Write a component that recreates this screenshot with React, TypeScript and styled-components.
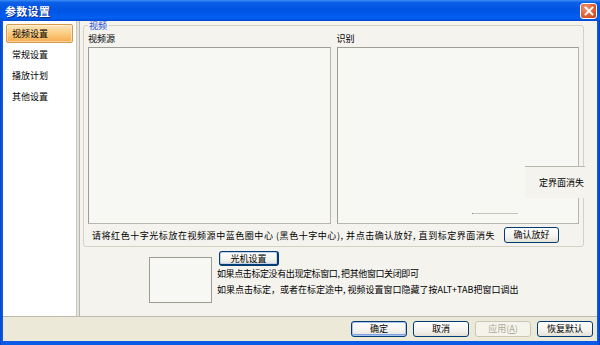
import React from "react";
import styled, { createGlobalStyle, css } from "styled-components";

const GlobalStyle = createGlobalStyle`
  html, body {
    margin: 0;
    padding: 0;
    overflow: hidden;
    background: #fff;
  }
  body {
    font-family: "Noto Sans CJK SC", "DejaVu Sans", sans-serif;
    font-size: 9px;
    color: #000;
  }
`;

const NAV_ITEMS = ["视频设置", "常规设置", "播放计划", "其他设置"];

export default function App() {
  return (
    <>
      <GlobalStyle />
      <Window>
        <TitleBar>
          <Title>参数设置</Title>
          <CloseButton aria-label="close">
            <svg width="10" height="10" viewBox="0 0 10 10">
              <path
                d="M1.5 1.5 L8.5 8.5 M8.5 1.5 L1.5 8.5"
                stroke="#fff"
                strokeWidth="1.8"
                strokeLinecap="square"
              />
            </svg>
          </CloseButton>
        </TitleBar>
        <Body>
          <Content>
            <Sidebar>
              {NAV_ITEMS.map((item, i) => (
                <NavItem key={item} $active={i === 0}>
                  {item}
                </NavItem>
              ))}
            </Sidebar>
            <Splitter />
            <Panel>
              <GroupBox>
                <Legend>视频</Legend>
                <Columns>
                  <Column>
                    <ColumnLabel>视频源</ColumnLabel>
                    <VideoBox />
                  </Column>
                  <Column>
                    <ColumnLabel>识别</ColumnLabel>
                    <VideoBox>
                      <Ghost>定界面消失</Ghost>
                      <GhostLine />
                    </VideoBox>
                  </Column>
                </Columns>
                <HintRow>
                  <HintText>
                    请将红色十字光标放在视频源中蓝色圈中心 (黑色十字中心), 并点击确认放好, 直到标定界面消失
                  </HintText>
                  <XpButton $width={55}>确认放好</XpButton>
                </HintRow>
              </GroupBox>
              <LowerRow>
                <PreviewBox />
                <LowerInfo>
                  <XpButton $width={60} $focused>
                    光机设置
                  </XpButton>
                  <InfoLine $spacing={-0.4}>
                    如果点击标定没有出现定标窗口, 把其他窗口关闭即可
                  </InfoLine>
                  <InfoLine $spacing={0}>
                    如果点击标定，或者在标定途中, 视频设置窗口隐藏了按ALT+TAB把窗口调出
                  </InfoLine>
                </LowerInfo>
              </LowerRow>
            </Panel>
          </Content>
          <Footer>
            <XpButton $width={56} $default>
              确定
            </XpButton>
            <XpButton $width={56}>取消</XpButton>
            <XpButton $width={56} disabled>
              应用(<u>A</u>)
            </XpButton>
            <XpButton $width={56}>恢复默认</XpButton>
          </Footer>
        </Body>
      </Window>
    </>
  );
}

const Window = styled.div`
  width: 600px;
  height: 345px;
  display: flex;
  flex-direction: column;
  background: linear-gradient(to right, #0842c8, #0a5ae6 2px, #0a5ae6 598px, #0738b8);
  box-sizing: border-box;
`;

const TitleBar = styled.div`
  height: 21px;
  flex: none;
  display: flex;
  align-items: center;
  justify-content: space-between;
  padding: 0 3px 0 5px;
  background: linear-gradient(
    to bottom,
    #3b8cf5 0%,
    #0a5fe6 12%,
    #0054e3 45%,
    #015ff0 85%,
    #0049d4 100%
  );
`;

const Title = styled.span`
  color: #fff;
  font-weight: bold;
  font-size: 11px;
  letter-spacing: 0.3px;
  text-shadow: 1px 1px 0 #0a2a8a;
`;

const CloseButton = styled.div`
  width: 15px;
  height: 14px;
  margin-top: 1px;
  display: flex;
  align-items: center;
  justify-content: center;
  border: 1px solid #fff;
  border-radius: 3px;
  background: radial-gradient(circle at 35% 30%, #f09a78 0%, #e0643c 50%, #c43e14 100%);
`;

const Body = styled.div`
  flex: 1;
  margin: 0 3px 4px 3px;
  display: flex;
  flex-direction: column;
  background: #ece9d8;
`;

const Content = styled.div`
  height: 295px;
  display: flex;
`;

const Sidebar = styled.div`
  width: 73px;
  box-sizing: border-box;
  padding: 3px 3px 0 3px;
  background: #fff;
  display: flex;
  flex-direction: column;
  gap: 2px;
`;

const NavItem = styled.div<{ $active?: boolean }>`
  height: 19px;
  box-sizing: border-box;
  padding-left: 5px;
  display: flex;
  align-items: center;
  font-size: 9px;
  border: 1px solid transparent;
  border-radius: 2px;
  ${(p) =>
    p.$active &&
    css`
      background: linear-gradient(to bottom, #fde6bd 0%, #fbcf86 45%, #f5ab4e 100%);
      border-color: #d99a48;
      box-shadow: inset 0 0 0 1px rgba(255, 255, 255, 0.45);
    `}
`;

const Splitter = styled.div`
  width: 4px;
  box-sizing: border-box;
  background: #e4e3dc;
  border-left: 1px solid #c9c8c0;
  border-right: 1px solid #b8b7ae;
`;

const Panel = styled.div`
  flex: 1;
  background: #f4f3ee;
  padding: 0 13px 0 3px;
  display: flex;
  flex-direction: column;
`;

const GroupBox = styled.fieldset`
  margin: 0;
  padding: 0 4px 3px 4px;
  border: 1px solid #d3d2c4;
  border-radius: 3px;
  min-width: 0;
`;

const Legend = styled.legend`
  padding: 0 1px;
  margin: 0;
  font-size: 9px;
  line-height: 9px;
  margin-top: 1px;
  color: #1a4fd4;
`;

const Columns = styled.div`
  display: grid;
  grid-template-columns: 1fr 1fr;
  column-gap: 6px;
`;

const Column = styled.div`
  display: flex;
  flex-direction: column;
`;

const ColumnLabel = styled.div`
  font-size: 9px;
  line-height: 10px;
  margin: 4px 0 3px;
`;

const VideoBox = styled.div`
  position: relative;
  height: 177px;
  box-sizing: border-box;
  border: 1px solid #9d9d96;
  border-right-color: #b6b6ae;
  border-bottom-color: #b6b6ae;
  background: #f7f7f3;
`;

const Ghost = styled.div`
  position: absolute;
  right: -7px;
  top: 118px;
  width: 60px;
  height: 32px;
  box-sizing: border-box;
  padding-left: 14px;
  display: flex;
  align-items: center;
  background: #f4f3ee;
  font-size: 9px;
  border-top: 1px solid #b8b8b0;
  border-radius: 0 0 0 4px;
`;

const GhostLine = styled.div`
  position: absolute;
  left: 134px;
  top: 165px;
  width: 45px;
  height: 1px;
  background: #c4c4bc;
  border-left: 1px solid #5a7fd0;
`;

const HintRow = styled.div`
  height: 16px;
  margin-top: 3px;
  padding-left: 4px;
  padding-right: 20px;
  display: flex;
  align-items: center;
  justify-content: space-between;
`;

const HintText = styled.span`
  font-size: 9px;
  letter-spacing: 0.55px;
  white-space: nowrap;
`;

const LowerRow = styled.div`
  display: flex;
  gap: 5px;
  margin: 4px 0 0 66px;
`;

const PreviewBox = styled.div`
  width: 63px;
  height: 46px;
  margin-top: 6px;
  box-sizing: border-box;
  border: 1px solid #9d9d96;
  background: #f7f7f3;
`;

const LowerInfo = styled.div`
  display: flex;
  flex-direction: column;
  align-items: flex-start;
  padding-left: 2px;
`;

const InfoLine = styled.div<{ $spacing: number }>`
  font-size: 9px;
  line-height: 16px;
  letter-spacing: ${(p) => p.$spacing}px;
  margin-left: -2px;
  white-space: nowrap;
`;

const Footer = styled.div`
  flex: 1;
  border-top: 1px solid #bdbbb0;
  display: flex;
  align-items: center;
  justify-content: flex-end;
  gap: 6px;
  padding-right: 4px;
`;

const XpButton = styled.button<{ $width: number; $default?: boolean; $focused?: boolean }>`
  width: ${(p) => p.$width}px;
  height: 16px;
  padding: 0;
  box-sizing: border-box;
  font-family: "Noto Sans CJK SC", "DejaVu Sans", sans-serif;
  font-size: 9px;
  line-height: 14px;
  color: #000;
  border: 1px solid #003c74;
  border-radius: 3px;
  background: linear-gradient(to bottom, #ffffff 0%, #f4f3ee 60%, #e4e1d6 100%);
  ${(p) =>
    p.$default &&
    css`
      box-shadow: inset 0 0 0 1px #a8c4ef, inset 0 -1px 0 1px #7ea2e0;
    `}
  ${(p) =>
    p.$focused &&
    css`
      height: 15px;
      box-shadow: inset 0 0 0 1px #c5d3ef;
      border-width: 1px 2px 2px 1px;
    `}
  &:disabled {
    color: #aca899;
    border-color: #c9c7ba;
    background: #f5f4ea;
  }
  u {
    text-decoration: underline;
  }
`;
